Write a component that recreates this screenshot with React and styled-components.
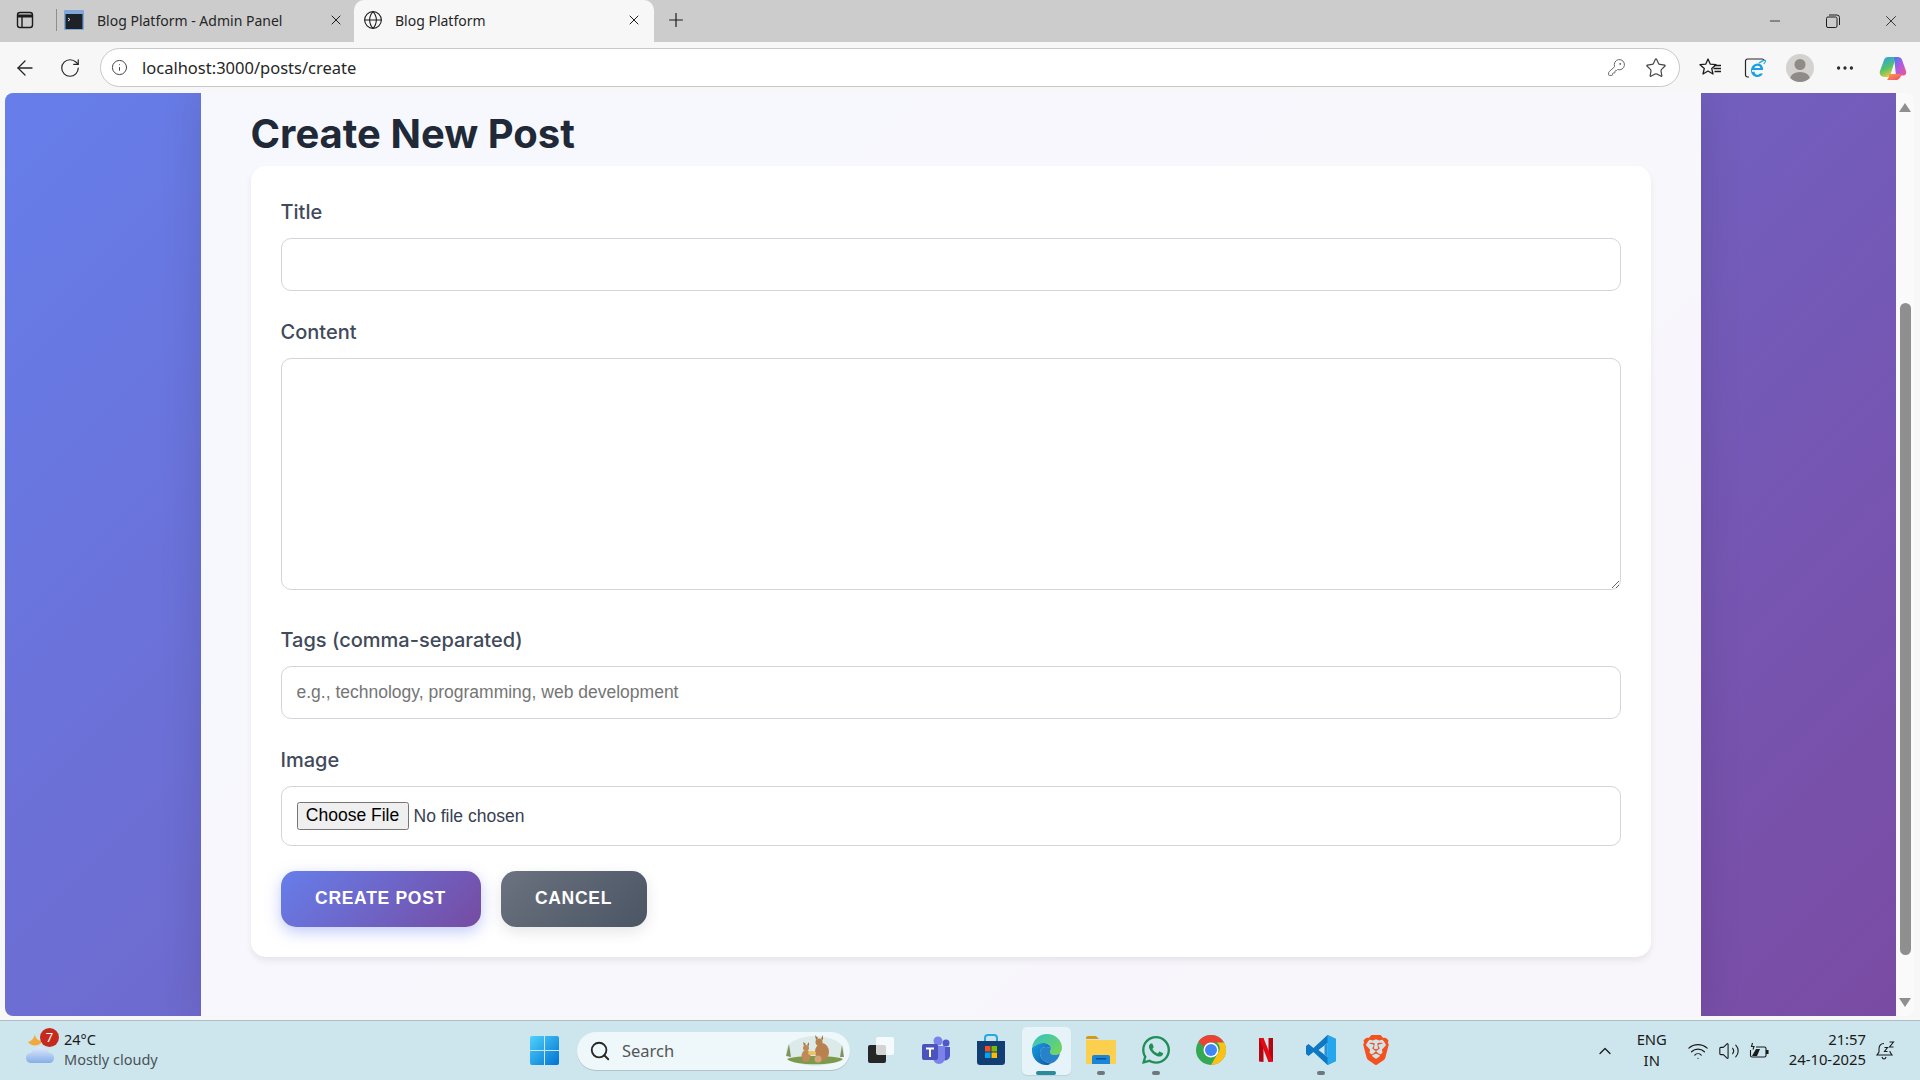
import React from "react";
import styled, { createGlobalStyle } from "styled-components";
import {
  ArrowLeft,
  ChevronUp,
  Globe,
  Info,
  KeyRound,
  Minus,
  MoreHorizontal,
  Plus,
  RotateCw,
  Search,
  Star,
  Volume2,
  Wifi,
  X,
} from "lucide-react";
import { FaWhatsapp } from "react-icons/fa";
import { SiBrave } from "react-icons/si";

const GlobalStyle = createGlobalStyle`
  html, body {
    margin: 0;
    padding: 0;
    height: 100%;
    overflow: hidden;
  }
  * {
    box-sizing: border-box;
  }
`;

const Screen = styled.div`
  width: 1920px;
  height: 1080px;
  display: flex;
  flex-direction: column;
  background: #f7f7f7;
  font-family: "Noto Sans", "Open Sans", sans-serif;
`;

/* ---------- browser chrome ---------- */

const TabBar = styled.div`
  height: 42px;
  display: flex;
  align-items: stretch;
  background: #cccccc;
`;

const SidebarButton = styled.div`
  width: 50px;
  display: flex;
  align-items: center;
  justify-content: center;
  padding-bottom: 2px;
`;

const TabSeparator = styled.div`
  width: 1px;
  height: 22px;
  margin: 9px 0 0 6px;
  background: #8f8f8f;
`;

const Tab = styled.div`
  width: ${(p) => p.$width}px;
  display: flex;
  align-items: center;
  gap: ${(p) => p.$gap}px;
  padding: 0 ${(p) => p.$right}px 2px ${(p) => p.$left}px;
  background: ${(p) => (p.$active ? "#f7f7f7" : "transparent")};
  border-radius: 10px 10px 0 0;
`;

const TabTitle = styled.span`
  flex: 1;
  font-size: 14px;
  color: #262626;
  white-space: nowrap;
`;

const NewTab = styled.div`
  width: 44px;
  display: flex;
  align-items: center;
  justify-content: center;
  padding-bottom: 2px;
`;

const WindowControls = styled.div`
  margin-left: auto;
  display: flex;
`;

const WindowButton = styled.div`
  width: 58px;
  display: flex;
  align-items: center;
  justify-content: center;
`;

const Toolbar = styled.div`
  height: 51px;
  display: flex;
  align-items: center;
  padding-left: 2px;
  background: #f7f7f7;
`;

const ToolButton = styled.div`
  width: ${(p) => p.$w || 45}px;
  height: 39px;
  flex-shrink: 0;
  display: flex;
  align-items: center;
  justify-content: center;
`;

const AddressBar = styled.div`
  width: 1580px;
  height: 39px;
  margin: 0 7px 0 8px;
  display: flex;
  align-items: center;
  gap: 14px;
  padding: 0 12px 0 10px;
  background: #ffffff;
  border: 1px solid #c8c8c8;
  border-radius: 20px;
`;

const Url = styled.span`
  flex: 1;
  font-size: 16.5px;
  color: #262626;
`;

const AddressIcons = styled.div`
  display: flex;
  align-items: center;
  gap: 19px;
`;

const Avatar = styled.div`
  width: 28px;
  height: 28px;
  border-radius: 50%;
  background: #d3d2cf;
  overflow: hidden;
  display: flex;
`;

/* ---------- page ---------- */

const Viewport = styled.div`
  width: 1909px;
  height: 923px;
  margin-left: 5px;
  display: flex;
  background: #fafafa;
  border-radius: 8px;
  overflow: hidden;
`;

const PageBackground = styled.div`
  flex: 1;
  display: flex;
  justify-content: center;
  background: linear-gradient(135deg, #667eea 0%, #7a4ba3 100%);
`;

const Main = styled.main`
  width: 1500px;
  padding: 17px 50px 0;
  background: rgba(255, 255, 255, 0.95);
  box-shadow: 0 0 40px rgba(0, 0, 0, 0.12);
  font-family: Inter, "Liberation Sans", sans-serif;
`;

const Heading = styled.h1`
  margin: 0 0 8px;
  font-size: 40px;
  line-height: 48px;
  font-weight: 700;
  color: #1f2937;
`;

const Card = styled.form`
  height: 791px;
  padding: 30px;
  background: #ffffff;
  border-radius: 15px;
  box-shadow: 0 4px 6px rgba(0, 0, 0, 0.07);
`;

const Field = styled.div`
  margin-bottom: ${(p) => p.$gap || 25}px;
`;

const Label = styled.label`
  display: block;
  margin-bottom: 10px;
  font-size: 20px;
  line-height: 32px;
  font-weight: 500;
  color: #414a5a;
`;

const TextInput = styled.input`
  display: block;
  width: 100%;
  height: 53px;
  padding: 15px;
  font-family: "Liberation Sans", Arial, sans-serif;
  font-size: 17.5px;
  background: #fff;
  border: 1px solid #d3d4dc;
  border-radius: 10px;
  &::placeholder {
    color: #757575;
  }
`;

const TextArea = styled.textarea`
  display: block;
  width: 100%;
  height: 232px;
  padding: 15px;
  font-family: "Liberation Sans", Arial, sans-serif;
  font-size: 17.5px;
  background: #fff;
  border: 1px solid #d3d4dc;
  border-radius: 10px;
`;

const FileInput = styled.input`
  display: block;
  width: 100%;
  height: 60px;
  padding: 15px;
  font-family: "Liberation Sans", Arial, sans-serif;
  font-size: 17.5px;
  color: #374151;
  background: #fff;
  border: 1px solid #d3d4dc;
  border-radius: 10px;
  &::file-selector-button {
    color: #000;
    font-size: 17.5px;
    width: 112px;
    height: 28px;
    padding: 0;
    margin-right: 5px;
  }
`;

const Actions = styled.div`
  display: flex;
  gap: 20px;
`;

const ActionButton = styled.button`
  width: ${(p) => p.$width}px;
  height: 56px;
  border: 0;
  border-radius: 15px;
  font-family: "Liberation Sans", Arial, sans-serif;
  font-size: 17.5px;
  font-weight: 700;
  letter-spacing: 0.7px;
  text-transform: uppercase;
  color: #ffffff;
  background: ${(p) =>
    p.$secondary
      ? "linear-gradient(135deg, #6b7280 0%, #4b5563 100%)"
      : "linear-gradient(135deg, #667eea 0%, #764ba2 100%)"};
  box-shadow: ${(p) =>
    p.$secondary
      ? "0 5px 15px rgba(0, 0, 0, 0.1)"
      : "0 5px 15px rgba(102, 126, 234, 0.4)"};
`;

const ScrollRail = styled.div`
  width: 18px;
  flex-shrink: 0;
  display: flex;
  flex-direction: column;
  align-items: center;
  padding-top: 10px;
  background: #fafafa;
`;

const ScrollArrow = styled.div`
  width: 0;
  height: 0;
  border-left: 6.5px solid transparent;
  border-right: 6.5px solid transparent;
  border-bottom: ${(p) => (p.$down ? "0" : "9px solid #8f8f8f")};
  border-top: ${(p) => (p.$down ? "9px solid #8f8f8f" : "0")};
  margin-top: ${(p) => p.$top || 0}px;
`;

const ScrollThumb = styled.div`
  width: 11px;
  height: 652px;
  margin-top: 191px;
  background: #8f8f8f;
  border-radius: 6px;
`;

/* ---------- taskbar ---------- */

const Taskbar = styled.footer`
  height: 60px;
  margin-top: 4px;
  display: flex;
  align-items: center;
  background: #cde6ed;
  border-top: 1px solid #aebdc2;
`;

const Weather = styled.div`
  width: 530px;
  display: flex;
  align-items: center;
  gap: 9px;
  padding-left: 25px;
`;

const WeatherIcon = styled.div`
  position: relative;
  width: 30px;
  height: 38px;
  display: flex;
  align-items: flex-start;
`;

const Badge = styled.span`
  position: absolute;
  top: -4px;
  left: 15px;
  width: 19px;
  height: 19px;
  border-radius: 50%;
  background: #c42b1c;
  color: #fff;
  font-size: 13px;
  line-height: 19px;
  text-align: center;
`;

const WeatherText = styled.div`
  display: flex;
  flex-direction: column;
  padding-bottom: 4px;
  font-size: 14.5px;
  line-height: 20px;
  color: #1a1a1a;
`;

const WeatherNote = styled.span`
  color: #4a5257;
`;

const StartSlot = styled.div`
  width: 47px;
  display: flex;
`;

const SearchPill = styled.div`
  width: 273px;
  height: 38px;
  display: flex;
  align-items: center;
  gap: 11px;
  padding: 0 5px 0 12px;
  background: #eef7f9;
  border-radius: 19px;
  box-shadow: 0 1px 0 #b4c3c9;
  font-size: 16.5px;
  color: #555;
`;

const SearchLabel = styled.span`
  flex: 1;
`;

const AppRow = styled.div`
  display: flex;
  margin-left: 3.5px;
`;

const AppSlot = styled.div`
  position: relative;
  width: 55px;
  height: 48px;
  display: flex;
  align-items: center;
  justify-content: center;
  padding-bottom: 2px;
  &::before {
    content: "";
    position: absolute;
    inset: 0 3px;
    display: ${(p) => (p.$active ? "block" : "none")};
    background: #e6f3f8;
    border-radius: 5px;
    box-shadow: 0 1px 1px #bdd0d6;
  }
  & > * {
    position: relative;
  }
`;

const RunDot = styled.span`
  position: absolute;
  bottom: 0;
  left: 50%;
  width: ${(p) => (p.$active ? 20 : 8)}px;
  height: 4px;
  margin-left: ${(p) => (p.$active ? -10 : -4)}px;
  border-radius: 2px;
  background: ${(p) => (p.$active ? "#2b8a9c" : "#6d787d")};
`;

const Tray = styled.div`
  margin-left: auto;
  display: flex;
  align-items: center;
  font-size: 14.8px;
  color: #1a1a1a;
`;

const TrayChevron = styled.div`
  width: 30px;
  display: flex;
  justify-content: center;
  margin-right: 17px;
`;

const Language = styled.div`
  width: 30px;
  display: flex;
  flex-direction: column;
  align-items: center;
  padding-bottom: 2px;
  line-height: 21px;
  margin-right: 20px;
`;

const TrayIcons = styled.div`
  display: flex;
  align-items: center;
  gap: 9px;
  margin-right: 20px;
`;

const Clock = styled.div`
  display: flex;
  flex-direction: column;
  align-items: flex-end;
  padding-bottom: 3px;
  line-height: 20px;
  margin-right: 9px;
`;

const BellSlot = styled.div`
  width: 45px;
  display: flex;
`;

/* ---------- drawings ---------- */

const SidebarIcon = () => (
  <svg width="20" height="20" viewBox="0 0 20 20" fill="none" stroke="#1c1c1c" strokeWidth="1.4">
    <rect x="2.5" y="2.5" width="15" height="15" rx="2.5" />
    <path d="M2.5 6h15" strokeWidth="3" />
    <path d="M7 6v11" />
  </svg>
);

const TerminalFavicon = () => (
  <svg width="20" height="20" viewBox="0 0 20 20">
    <rect width="20" height="20" rx="1" fill="#7fa8d8" />
    <rect x="1.5" y="4" width="17" height="15" fill="#1e2228" />
    <path d="M4 8l2 1.5L4 11" stroke="#e8e8e8" fill="none" />
  </svg>
);

const RestoreIcon = () => (
  <svg width="14" height="14" viewBox="0 0 14 14" fill="none" stroke="#1c1c1c" strokeWidth="1">
    <rect x="0.5" y="3" width="10.5" height="10.5" rx="1.5" />
    <path d="M3 1h8a2.5 2.5 0 0 1 2.5 2.5V11" />
  </svg>
);

const FavoritesIcon = () => (
  <svg width="24" height="22" viewBox="0 0 24 22" fill="none" stroke="#1c1c1c" strokeWidth="1.3" strokeLinejoin="round">
    <path d="M10 2l2.300 5.200 5.700.5-4.300 3.700 1.300 5.600L10 14l-5 3 1.300-5.600L2 7.700l5.700-.5z" />
    <path d="M16 8.500H23M15.500 11.500H23M16.500 14.500H23" />
  </svg>
);

const IeIcon = () => (
  <svg width="22" height="22" viewBox="0 0 22 22" fill="none">
    <path d="M5 20H3.500A2 2 0 0 1 1.500 18V4a2 2 0 0 1 2-2H18a2 2 0 0 1 2 2" stroke="#262626" strokeWidth="1.2" />
    <path d="M8 13h11c.4-4-2-6.500-5.300-6.500C10 6.500 7 9.500 7 13.500S10 20 13.500 20c2.500 0 4.500-1.200 5.300-3.500h-3c-.6 1-1.300 1.300-2.300 1.300-1.600 0-2.800-1.200-3-3H8zM10.500 11c.3-1.400 1.500-2.300 3-2.300s2.600.9 2.800 2.300z" fill="#1ba1e2" fillRule="evenodd" />
    <path d="M15 6c3-2 6-3.500 6.500-2.500.3.7-.5 2-1.800 3.500" stroke="#1ba1e2" strokeWidth="1.100" />
  </svg>
);

const AvatarFigure = () => (
  <svg width="28" height="28" viewBox="0 0 28 28" fill="#8f8c87">
    <circle cx="14" cy="10.500" r="5.500" />
    <ellipse cx="14" cy="25" rx="10" ry="7" />
  </svg>
);

const CopilotIcon = () => (
  <svg width="28" height="28" viewBox="0 0 28 28">
    <defs>
      <linearGradient id="copA" x1="0.2" y1="0" x2="0.6" y2="1">
        <stop offset="0" stopColor="#2f9ff0" />
        <stop offset="0.55" stopColor="#53c26b" />
        <stop offset="1" stopColor="#f5c93b" />
      </linearGradient>
      <linearGradient id="copB" x1="0" y1="0" x2="1" y2="1">
        <stop offset="0" stopColor="#3f7cf5" />
        <stop offset="0.5" stopColor="#b35be0" />
        <stop offset="1" stopColor="#f0568f" />
      </linearGradient>
      <linearGradient id="copC" x1="0" y1="0" x2="1" y2="1">
        <stop offset="0" stopColor="#f9a14a" />
        <stop offset="1" stopColor="#f0486d" />
      </linearGradient>
    </defs>
    <path d="M9 3h8l-5.500 17.500c-.4 1.500-1.700 2.500-3.200 2.500H5.500C2 23 0 20 1 17L5 6c.6-1.800 2.200-3 4-3z" fill="url(#copA)" />
    <path d="M15 3h4c1.800 0 3.300 1 4 2.800L27 17c.8 2.500-.6 4.500-3 4.500H17z" fill="url(#copB)" />
    <path d="M10.500 20h12c-.8 3.500-2.500 6-5.500 6H8c1.200-1 2-3.500 2.500-6z" fill="url(#copC)" />
  </svg>
);

const WeatherGlyph = () => (
  <svg width="30" height="34" viewBox="0 0 30 34">
    <defs>
      <linearGradient id="cloud" x1="0" y1="0" x2="0" y2="1">
        <stop offset="0" stopColor="#dfe9fa" />
        <stop offset="1" stopColor="#86aee8" />
      </linearGradient>
    </defs>
    <path d="M10 2c-1 4-3 7-7 8 2 3 6 4 10 3 2-1 3-2 4-4-4 0-7-3-7-7z" fill="#f2a93b" />
    <path d="M7 31C3 31 1 29 1 26s2-5 5-5c1-3 4-6 9-6s8 3 9 6c3 0 5 2 5 5s-2 5-5 5z" fill="url(#cloud)" />
  </svg>
);

const WindowsLogo = () => (
  <svg width="29" height="29" viewBox="0 0 29 29">
    <defs>
      <linearGradient id="win" x1="0" y1="0" x2="1" y2="1">
        <stop offset="0" stopColor="#4fd2fb" />
        <stop offset="1" stopColor="#0072d2" />
      </linearGradient>
    </defs>
    <path d="M0 2a2 2 0 0 1 2-2h12v14H0zM15 0h12a2 2 0 0 1 2 2v12H15zM0 15h14v14H2a2 2 0 0 1-2-2zM15 15h14v12a2 2 0 0 1-2 2H15z" fill="url(#win)" />
  </svg>
);

const KangarooDoodle = () => (
  <svg width="60" height="32" viewBox="0 0 60 32">
    <ellipse cx="30" cy="16" rx="29" ry="15" fill="#dcebea" />
    <path d="M2 24c8-4 48-4 56 0-6 7-50 7-56 0z" fill="#7d9a4c" />
    <path d="M1 21l3-12 2 13zM55 22l2-12 2 12z" fill="#7f9560" />
    <ellipse cx="37" cy="17" rx="7" ry="9" fill="#b9814f" />
    <circle cx="34" cy="7" r="3.500" fill="#b9814f" />
    <path d="M31 5l-1-5 3 3zM36 4l2-4 0 5z" fill="#a5703f" />
    <ellipse cx="21" cy="21" rx="4.500" ry="6" fill="#c08a58" />
    <circle cx="21" cy="13" r="3" fill="#c08a58" />
    <path d="M19 11l-1-4 3 2zM22 10l2-3 0 4z" fill="#a5703f" />
    <circle cx="33" cy="24" r="3.500" fill="#d3a477" />
    <ellipse cx="27" cy="18" rx="4" ry="2" fill="#f2c25a" />
  </svg>
);

const TaskViewIcon = () => (
  <svg width="26" height="26" viewBox="0 0 26 26">
    <rect x="0" y="8" width="18" height="18" rx="2" fill="#262626" />
    <rect x="8" y="0" width="18" height="18" rx="2" fill="#ffffff" fillOpacity="0.8" />
  </svg>
);

const TeamsIcon = () => (
  <svg width="30" height="30" viewBox="0 0 30 30">
    <circle cx="17" cy="6" r="4.500" fill="#7b83eb" />
    <circle cx="25" cy="8" r="3.500" fill="#5059c9" />
    <path d="M20 12h9v9a5 5 0 0 1-7 4z" fill="#5059c9" />
    <path d="M9 11h15v12a6 6 0 0 1-12 0z" fill="#7b83eb" />
    <rect x="1" y="9" width="16" height="16" rx="2" fill="#4b53bc" />
    <path d="M5 12.500h8v2h-3v7.500H8v-7.500H5z" fill="#fff" />
  </svg>
);

const StoreIcon = () => (
  <svg width="30" height="32" viewBox="0 0 30 32">
    <path d="M9 7V4a3 3 0 0 1 3-3h6a3 3 0 0 1 3 3v3" fill="none" stroke="#27a8e0" strokeWidth="2" />
    <path d="M1 7h28v21a3 3 0 0 1-3 3H4a3 3 0 0 1-3-3z" fill="#123f73" />
    <rect x="9" y="12" width="5.500" height="5.500" fill="#f25022" />
    <rect x="15.500" y="12" width="5.500" height="5.500" fill="#7fba00" />
    <rect x="9" y="18.500" width="5.500" height="5.500" fill="#00a4ef" />
    <rect x="15.500" y="18.500" width="5.500" height="5.500" fill="#ffb900" />
  </svg>
);

const EdgeIcon = () => (
  <svg width="31" height="31" viewBox="0 0 31 31">
    <defs>
      <linearGradient id="edgeA" x1="0" y1="0" x2="1" y2="1">
        <stop offset="0" stopColor="#2fc3c8" />
        <stop offset="1" stopColor="#7bd84e" />
      </linearGradient>
      <linearGradient id="edgeB" x1="0" y1="0" x2="1" y2="1">
        <stop offset="0" stopColor="#1b9de2" />
        <stop offset="1" stopColor="#0c59a4" />
      </linearGradient>
    </defs>
    <path d="M1 14C2 6 8 0 16 0c8 0 15 6 15 14 0 4-3 7-7 7-3 0-5-1-5-3 0-1 1-1.500 1-3.500 0-3-3.500-5.500-7.500-5.500C8 9 4 11 1 14z" fill="url(#edgeA)" />
    <path d="M1 14c3-3 7-5 11.500-5 4 0 7.500 2.500 7.500 5.500-5-3-11-1-11 4.500 0 5 5 10 11 10.500C18 30.500 17 31 15.500 31 7 31 0 24 1 14z" fill="url(#edgeB)" />
    <path d="M20 29.500c-6-.5-11-5.500-11-10.500 0-5.500 6-7.500 11-4.500 0 1.500-1 2-1 3.500 0 2 2 3 5 3 2 0 4-1 5-2-1 5-4 9-9 10.500z" fill="#1275c4" opacity="0.9" />
  </svg>
);

const ExplorerIcon = () => (
  <svg width="30" height="30" viewBox="0 0 30 30">
    <path d="M0 3a2 2 0 0 1 2-2h8l3 3h-13z" fill="#d89a12" />
    <path d="M0 5h30v23a1 1 0 0 1-1 1H1a1 1 0 0 1-1-1z" fill="#fbd04f" />
    <path d="M6 22a2 2 0 0 1 2-2h14a2 2 0 0 1 2 2v7H6z" fill="#1a86d8" />
    <rect x="10" y="23" width="10" height="1.500" fill="#0d4f8f" />
  </svg>
);

const ChromeIcon = () => (
  <svg width="30" height="30" viewBox="0 0 30 30">
    <circle cx="15" cy="15" r="15" fill="#34a853" />
    <path d="M15 0a15 15 0 0 1 13 7.500H15a7.500 7.500 0 0 0-7 4.500L2.500 6.500A15 15 0 0 1 15 0z" fill="#ea4335" />
    <path d="M28 7.500A15 15 0 0 1 15 30l6.500-11.200a7.500 7.500 0 0 0-.6-11.300z" fill="#fbc116" />
    <circle cx="15" cy="15" r="7.500" fill="#fff" />
    <circle cx="15" cy="15" r="6" fill="#4285f4" />
  </svg>
);

const NetflixIcon = () => (
  <svg width="14" height="24" viewBox="0 0 14 24">
    <path d="M0 0h4.500v24L0 23.500z" fill="#b20710" />
    <path d="M9.500 0H14v23.500L9.500 24z" fill="#b20710" />
    <path d="M0 0h4.500L14 23.500 9.500 24z" fill="#e50914" />
  </svg>
);

const VscodeIcon = () => (
  <svg width="30" height="30" viewBox="0 0 30 30">
    <path d="M21.500 0L30 4v22l-8.500 4-14-13L2.500 21 0 19v-8l2.500-2 5 4z" fill="#0f78c4" />
    <path d="M21.500 0L30 4v22l-8.500 4z" fill="#25a7ee" />
    <path d="M21.500 8l-9 7 9 7z" fill="#cde6ed" />
    <path d="M21.500 8v14l-3-2.400V10.400z" fill="#1f95df" />
  </svg>
);

const BatteryIcon = () => (
  <svg width="20" height="20" viewBox="0 0 20 20" fill="none" stroke="#1a1a1a" strokeWidth="1.1">
    <path d="M7 6h8.500a1.500 1.500 0 0 1 1.500 1.500v7a1.500 1.500 0 0 1-1.500 1.500H3a1.500 1.500 0 0 1-1.500-1.500V9" />
    <path d="M17.500 9.500h1.500v3h-1.500z" fill="#1a1a1a" />
    <path d="M3 15h5l3-7H7z" fill="#1a1a1a" stroke="none" />
    <path d="M3.500 2L2.500 5.500H5L4 8.500" />
  </svg>
);

const SnoozeBell = () => (
  <svg width="20" height="22" viewBox="0 0 20 22" fill="none" stroke="#1a1a1a" strokeWidth="1.1">
    <path d="M9 3.500C5.500 3.500 4 6 4 9v3l-2 3h15l-2-3v-1" />
    <path d="M7 17c.3 1.200 1 2 2 2s1.700-.8 2-2" />
    <path d="M9.500 7.500h3l-3 4h3M14.500 2h4l-4 5h4" />
  </svg>
);

const taskbarApps = [
  { key: "taskview", icon: <TaskViewIcon /> },
  { key: "teams", icon: <TeamsIcon /> },
  { key: "store", icon: <StoreIcon /> },
  { key: "edge", icon: <EdgeIcon />, active: true, running: true },
  { key: "explorer", icon: <ExplorerIcon />, running: true },
  { key: "whatsapp", icon: <FaWhatsapp size={32} color="#1f8f57" />, running: true },
  { key: "chrome", icon: <ChromeIcon /> },
  { key: "netflix", icon: <NetflixIcon /> },
  { key: "vscode", icon: <VscodeIcon />, running: true },
  { key: "brave", icon: <SiBrave size={30} color="#f5511e" /> },
];

export default function App() {
  return (
    <Screen>
      <GlobalStyle />
      <TabBar>
        <SidebarButton>
          <SidebarIcon />
        </SidebarButton>
        <TabSeparator />
        <Tab $width={297} $left={7} $right={10} $gap={13}>
          <TerminalFavicon />
          <TabTitle>Blog Platform - Admin Panel</TabTitle>
          <X size={16} strokeWidth={1.5} color="#1c1c1c" />
        </Tab>
        <Tab $width={300} $left={9} $right={12} $gap={12} $active>
          <Globe size={20} strokeWidth={1.3} color="#1c1c1c" />
          <TabTitle>Blog Platform</TabTitle>
          <X size={16} strokeWidth={1.5} color="#1c1c1c" />
        </Tab>
        <NewTab>
          <Plus size={22} strokeWidth={1.3} color="#1c1c1c" />
        </NewTab>
        <WindowControls>
          <WindowButton>
            <Minus size={16} strokeWidth={1.2} color="#1c1c1c" />
          </WindowButton>
          <WindowButton>
            <RestoreIcon />
          </WindowButton>
          <WindowButton>
            <X size={18} strokeWidth={1.1} color="#1c1c1c" />
          </WindowButton>
        </WindowControls>
      </TabBar>

      <Toolbar>
        <ToolButton>
          <ArrowLeft size={24} strokeWidth={1.3} color="#262626" />
        </ToolButton>
        <ToolButton>
          <RotateCw size={22} strokeWidth={1.3} color="#262626" />
        </ToolButton>
        <AddressBar>
          <Info size={17} strokeWidth={1.4} color="#444" />
          <Url>localhost:3000/posts/create</Url>
          <AddressIcons>
            <KeyRound size={19} strokeWidth={1.1} color="#555" />
            <Star size={22} strokeWidth={1.3} color="#444" />
          </AddressIcons>
        </AddressBar>
        <ToolButton>
          <FavoritesIcon />
        </ToolButton>
        <ToolButton>
          <IeIcon />
        </ToolButton>
        <ToolButton>
          <Avatar>
            <AvatarFigure />
          </Avatar>
        </ToolButton>
        <ToolButton>
          <MoreHorizontal size={22} strokeWidth={1.6} color="#262626" />
        </ToolButton>
        <ToolButton $w={51}>
          <CopilotIcon />
        </ToolButton>
      </Toolbar>

      <Viewport>
        <PageBackground>
          <Main>
            <Heading>Create New Post</Heading>
            <Card onSubmit={(e) => e.preventDefault()}>
              <Field $gap={24.5}>
                <Label htmlFor="title">Title</Label>
                <TextInput id="title" type="text" />
              </Field>
              <Field $gap={34}>
                <Label htmlFor="content">Content</Label>
                <TextArea id="content" />
              </Field>
              <Field>
                <Label htmlFor="tags">Tags (comma-separated)</Label>
                <TextInput
                  id="tags"
                  type="text"
                  placeholder="e.g., technology, programming, web development"
                />
              </Field>
              <Field>
                <Label htmlFor="image">Image</Label>
                <FileInput id="image" type="file" />
              </Field>
              <Actions>
                <ActionButton type="submit" $width={200}>
                  Create Post
                </ActionButton>
                <ActionButton type="button" $width={146} $secondary>
                  Cancel
                </ActionButton>
              </Actions>
            </Card>
          </Main>
        </PageBackground>
        <ScrollRail>
          <ScrollArrow />
          <ScrollThumb />
          <ScrollArrow $down $top={43} />
        </ScrollRail>
      </Viewport>

      <Taskbar>
        <Weather>
          <WeatherIcon>
            <WeatherGlyph />
            <Badge>7</Badge>
          </WeatherIcon>
          <WeatherText>
            <span>24°C</span>
            <WeatherNote>Mostly cloudy</WeatherNote>
          </WeatherText>
        </Weather>
        <StartSlot>
          <WindowsLogo />
        </StartSlot>
        <SearchPill>
          <Search size={22} strokeWidth={2} color="#262626" />
          <SearchLabel>Search</SearchLabel>
          <KangarooDoodle />
        </SearchPill>
        <AppRow>
          {taskbarApps.map((app) => (
            <AppSlot key={app.key} $active={app.active}>
              {app.icon}
              {app.running && <RunDot $active={app.active} />}
            </AppSlot>
          ))}
        </AppRow>
        <Tray>
          <TrayChevron>
            <ChevronUp size={20} strokeWidth={1.5} color="#1a1a1a" />
          </TrayChevron>
          <Language>
            <span>ENG</span>
            <span>IN</span>
          </Language>
          <TrayIcons>
            <Wifi size={22} strokeWidth={1.3} color="#1a1a1a" />
            <Volume2 size={22} strokeWidth={1.2} color="#1a1a1a" />
            <BatteryIcon />
          </TrayIcons>
          <Clock>
            <span>21:57</span>
            <span>24-10-2025</span>
          </Clock>
          <BellSlot>
            <SnoozeBell />
          </BellSlot>
        </Tray>
      </Taskbar>
    </Screen>
  );
}
